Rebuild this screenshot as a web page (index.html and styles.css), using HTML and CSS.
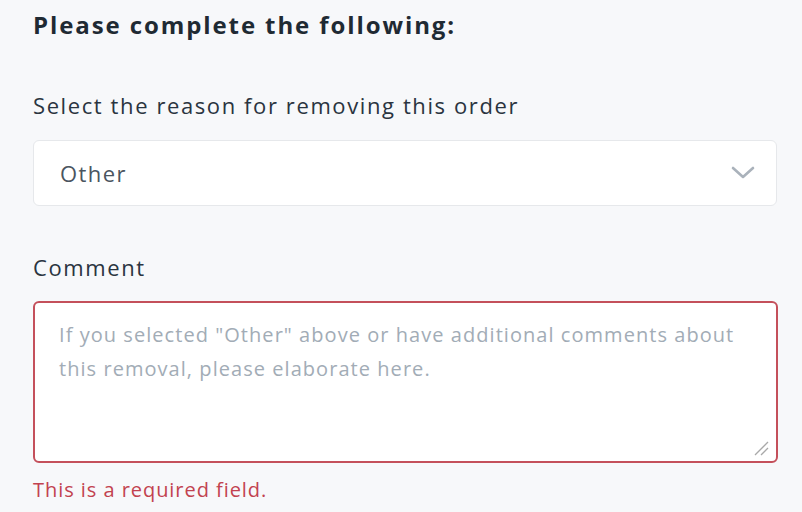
FILE: index.html
```html
<!DOCTYPE html>
<html>
<head>
<meta charset="utf-8">
<link rel="stylesheet" href="styles.css">
</head>
<body>
<div class="form">
  <h2 class="title">Please complete the following:</h2>
  <label class="label label-reason">Select the reason for removing this order</label>
  <div class="select">
    <span class="select-value">Other</span>
    <svg class="chevron" width="24" height="14" viewBox="0 0 24 14"><path d="M2 2 L12 11 L22 2" fill="none" stroke="#aab2bb" stroke-width="2.6" stroke-linecap="round" stroke-linejoin="round"/></svg>
  </div>
  <label class="label label-comment">Comment</label>
  <div class="textarea">
    <span class="placeholder">If you selected "Other" above or have additional comments about this removal, please elaborate here.</span>
    <svg class="grip" width="18" height="18" viewBox="0 0 18 18"><path d="M3 16 L16 3 M9 16 L16 9" stroke="#a9a9a9" stroke-width="1.3" fill="none"/></svg>
  </div>
  <div class="error">This is a required field.</div>
</div>
</body>
</html>
```
FILE: styles.css
```css
html, body {
  margin: 0;
  padding: 0;
  background: #f7f8fa;
}
body {
  font-family: "Open Sans", "Liberation Sans", sans-serif;
  color: #2a3440;
}
.form {
  display: flex;
  flex-direction: column;
  align-items: flex-start;
  padding: 8px 0 0 33px;
  width: 745px;
}
.title {
  margin: 0;
  font-size: 24px;
  font-weight: 700;
  letter-spacing: 1.9px;
  line-height: 34px;
  color: #1f2a33;
}
.label {
  font-size: 22px;
  letter-spacing: 1.6px;
  line-height: 30px;
  color: #2a3440;
}
.label-reason {
  margin-top: 48px;
}
.select {
  margin-top: 20px;
  box-sizing: border-box;
  width: 744px;
  height: 66px;
  background: #fff;
  border: 1px solid #e6e8eb;
  border-radius: 6px;
  display: flex;
  align-items: center;
  justify-content: space-between;
  padding: 0 21px 0 26px;
}
.select-value {
  font-size: 22px;
  letter-spacing: 1.4px;
  color: #4a5560;
}
.chevron {
  display: block;
}
.label-comment {
  margin-top: 46px;
}
.textarea {
  position: relative;
  margin-top: 19px;
  box-sizing: border-box;
  width: 745px;
  height: 162px;
  background: #fff;
  border: 2px solid #c4505b;
  border-radius: 6px;
  padding: 15px 24px;
}
.placeholder {
  display: block;
  font-size: 20px;
  letter-spacing: 1.05px;
  line-height: 34px;
  color: #a2acb6;
}
.grip {
  position: absolute;
  right: 6px;
  bottom: 4px;
}
.error {
  margin-top: 13px;
  font-size: 20px;
  letter-spacing: 0.95px;
  line-height: 28px;
  color: #c2424f;
}
```
